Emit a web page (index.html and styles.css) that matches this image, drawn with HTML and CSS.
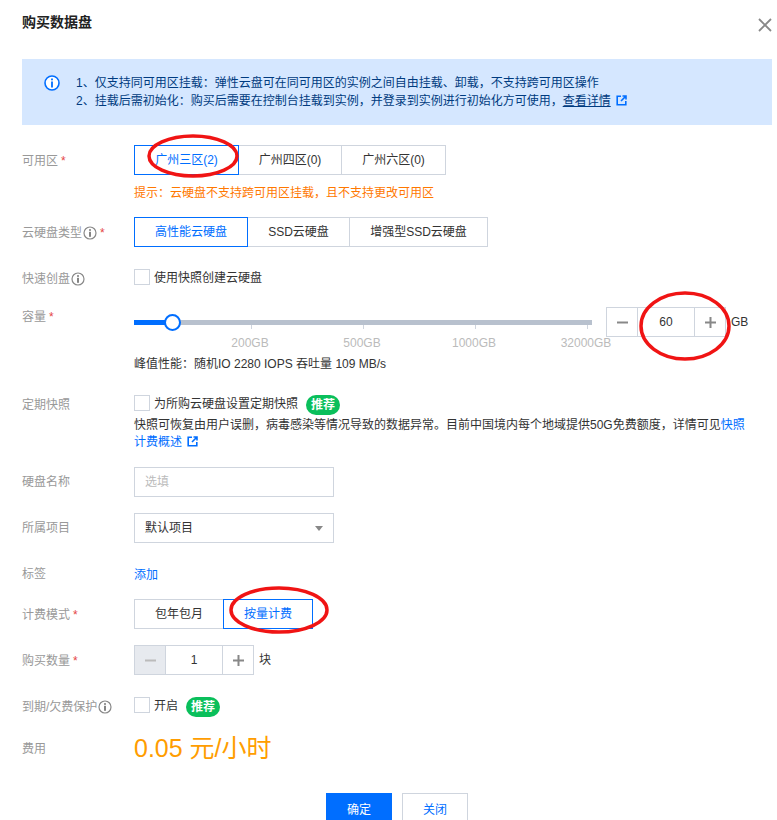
FILE: index.html
```html
<!DOCTYPE html>
<html>
<head>
    <title>购买数据盘</title>
    <link rel="stylesheet" href="styles.css">
</head>
<body>
    <div class="dialog">
        <div class="dialog-head">
            <h1>购买数据盘</h1>
            <svg class="close" width="14" height="14" viewBox="0 0 14 14"><path d="M1 1L13 13M13 1L1 13" stroke="#888" stroke-width="1.8" fill="none"/></svg>
        </div>

        <div class="alert">
            <svg class="alert-icon" width="16" height="16" viewBox="0 0 16 16"><circle cx="8" cy="8" r="7" fill="#fff" stroke="#006eff" stroke-width="1.6"/><rect x="7.1" y="3.5" width="1.8" height="1.8" fill="#006eff"/><rect x="7.1" y="6.5" width="1.8" height="6" fill="#006eff"/></svg>
            <div>
                <div>1、仅支持同可用区挂载：弹性云盘可在同可用区的实例之间自由挂载、卸载，不支持跨可用区操作</div>
                <div>2、挂载后需初始化：购买后需要在控制台挂载到实例，并登录到实例进行初始化方可使用，<a class="alert-link" href="#">查看详情</a><svg class="ext" width="11" height="11" viewBox="0 0 11 11"><path d="M5 1.2H1.2V9.8H9.8V6M6.5 1H10V4.5M10 1L5 6" stroke="#006eff" stroke-width="1.6" fill="none"/></svg></div>
            </div>
        </div>

        <!-- 可用区 -->
        <div class="row row-zone">
            <div class="label label-seg">可用区<span class="req">*</span></div>
            <div class="field">
                <div class="seg">
                    <div class="seg-item seg-w105 active">广州三区(2)</div>
                    <div class="seg-item seg-w104">广州四区(0)</div>
                    <div class="seg-item seg-w105">广州六区(0)</div>
                </div>
                <div class="hint">提示：云硬盘不支持跨可用区挂载，且不支持更改可用区</div>
            </div>
        </div>

        <div class="row gap-16">
            <div class="label label-seg">云硬盘类型<svg class="tip" width="14" height="14" viewBox="0 0 14 14"><circle cx="7" cy="7" r="6" fill="none" stroke="#888" stroke-width="1.2"/><rect x="6.2" y="3.2" width="1.6" height="1.6" fill="#666"/><rect x="6.2" y="5.8" width="1.6" height="5" fill="#666"/></svg><span class="req">*</span></div>
            <div class="field">
                <div class="seg">
                    <div class="seg-item seg-w114 active">高性能云硬盘</div>
                    <div class="seg-item seg-w103">SSD云硬盘</div>
                    <div class="seg-item seg-w139">增强型SSD云硬盘</div>
                </div>
            </div>
        </div>

        <div class="row gap-22">
            <div class="label">快速创盘<svg class="tip" width="14" height="14" viewBox="0 0 14 14"><circle cx="7" cy="7" r="6" fill="none" stroke="#888" stroke-width="1.2"/><rect x="6.2" y="3.2" width="1.6" height="1.6" fill="#666"/><rect x="6.2" y="5.8" width="1.6" height="5" fill="#666"/></svg></div>
            <div class="field check-line">
                <span class="checkbox"></span>
                <span class="check-text">使用快照创建云硬盘</span>
            </div>
        </div>

        <!-- 容量 -->
        <div class="row gap-22">
            <div class="label">容量<span class="req">*</span></div>
            <div class="field">
                <div class="cap-line">
                    <div class="slider">
                        <div class="track">
                            <div class="track-on"></div>
                            <div class="handle"></div>
                        </div>
                        <div class="ticks">
                            <span class="tick tick-first"></span>
                            <span class="tick"></span>
                            <span class="tick"></span>
                            <span class="tick"></span>
                        </div>
                        <div class="tick-labels">
                            <span>200GB</span>
                            <span>500GB</span>
                            <span>1000GB</span>
                            <span>32000GB</span>
                        </div>
                    </div>
                    <div class="stepper">
                        <div class="step-btn">
                            <svg width="11" height="11" viewBox="0 0 11 11"><path d="M0 5.5H11" stroke="#888" stroke-width="2"/></svg>
                        </div>
                        <div class="step-value">60</div>
                        <div class="step-btn">
                            <svg width="11" height="11" viewBox="0 0 11 11"><path d="M0 5.5H11M5.5 0V11" stroke="#888" stroke-width="2"/></svg>
                        </div>
                    </div>
                    <span class="unit">GB</span>
                </div>
                <div class="perf">峰值性能：随机IO 2280 IOPS 吞吐量 109 MB/s</div>
            </div>
        </div>

        <div class="row gap-23">
            <div class="label">定期快照</div>
            <div class="field">
                <div class="check-line">
                    <span class="checkbox"></span>
                    <span class="check-text">为所购云硬盘设置定期快照</span>
                    <span class="badge">推荐</span>
                </div>
                <div class="desc">快照可恢复由用户误删，病毒感染等情况导致的数据异常。目前中国境内每个地域提供50G免费额度，详情可见<a href="#">快照计费概述</a><svg class="ext" width="11" height="11" viewBox="0 0 11 11"><path d="M5 1.2H1.2V9.8H9.8V6M6.5 1H10V4.5M10 1L5 6" stroke="#006eff" stroke-width="1.6" fill="none"/></svg></div>
            </div>
        </div>

        <div class="row gap-16">
            <div class="label label-box">硬盘名称</div>
            <div class="field">
                <div class="box placeholder">选填</div>
            </div>
        </div>

        <div class="row gap-16">
            <div class="label label-box">所属项目</div>
            <div class="field">
                <div class="box select">
                    <span>默认项目</span>
                    <span class="caret"></span>
                </div>
            </div>
        </div>

        <div class="row gap-23">
            <div class="label label-flat">标签</div>
            <div class="field"><a class="add-link" href="#">添加</a></div>
        </div>

        <div class="row gap-17">
            <div class="label label-seg">计费模式<span class="req">*</span></div>
            <div class="field">
                <div class="seg">
                    <div class="seg-item seg-w90">包年包月</div>
                    <div class="seg-item seg-w90 active">按量计费</div>
                </div>
            </div>
        </div>

        <div class="row gap-16">
            <div class="label label-seg">购买数量<span class="req">*</span></div>
            <div class="field cap-line">
                <div class="stepper stepper-plain">
                    <div class="step-btn disabled">
                        <svg width="11" height="11" viewBox="0 0 11 11"><path d="M0 5.5H11" stroke="#bbb" stroke-width="2"/></svg>
                    </div>
                    <div class="step-value">1</div>
                    <div class="step-btn">
                        <svg width="11" height="11" viewBox="0 0 11 11"><path d="M0 5.5H11M5.5 0V11" stroke="#888" stroke-width="2"/></svg>
                    </div>
                </div>
                <span class="unit">块</span>
            </div>
        </div>

        <div class="row gap-22">
            <div class="label">到期/欠费保护<svg class="tip" width="14" height="14" viewBox="0 0 14 14"><circle cx="7" cy="7" r="6" fill="none" stroke="#888" stroke-width="1.2"/><rect x="6.2" y="3.2" width="1.6" height="1.6" fill="#666"/><rect x="6.2" y="5.8" width="1.6" height="5" fill="#666"/></svg></div>
            <div class="field check-line">
                <span class="checkbox"></span>
                <span class="check-text">开启</span>
                <span class="badge">推荐</span>
            </div>
        </div>

        <div class="row gap-20">
            <div class="label label-seg">费用</div>
            <div class="field price">0.05 元/小时</div>
        </div>

        <div class="actions">
            <button class="btn btn-primary">确定</button>
            <button class="btn">关闭</button>
        </div>

        <!-- hand drawn marks on top of the screenshot -->
        <svg class="marks" width="777" height="820" viewBox="0 0 777 820">
            <ellipse cx="193" cy="156" rx="44" ry="20" />
            <ellipse cx="685" cy="326" rx="44" ry="33" />
            <ellipse cx="279" cy="610" rx="48" ry="22" />
        </svg>
    </div>
</body>
</html>
```

FILE: styles.css
```css
* {
    box-sizing: border-box;
}

html, body {
    margin: 0;
    height: 820px;
    overflow: hidden;
    background-color: #fff;
}

body {
    font-family: "Liberation Sans", "Noto Sans CJK SC", sans-serif;
    font-size: 12px;
    color: #333;
}

a {
    color: #006eff;
    text-decoration: none;
}

.dialog {
    position: relative;
    width: 777px;
    height: 820px;
    overflow: hidden;
    padding: 0 5px 0 22px;
}

.dialog-head {
    display: flex;
    justify-content: space-between;
    align-items: center;
    height: 59px;
    padding-bottom: 18px;
}

h1 {
    margin: 0;
    font-size: 14px;
    font-weight: bold;
    color: #222;
}

.close {
    margin-top: 9px;
}

.alert {
    display: flex;
    height: 66px;
    padding: 15px 0 15px 22px;
    background-color: #d5e7ff;
    color: #003b80;
    line-height: 18px;
}

.alert-icon {
    flex: none;
    margin: 1px 16px 0 0;
}

.alert-link {
    color: #003b80;
    text-decoration: underline;
}

.ext {
    margin-left: 5px;
    vertical-align: -1px;
}

/* form rows */
.row {
    display: flex;
}

.row-zone {
    margin-top: 20px;
}

.gap-16 { margin-top: 16px; }
.gap-17 { margin-top: 17px; }
.gap-20 { margin-top: 20px; }
.gap-22 { margin-top: 22px; }
.gap-23 { margin-top: 23px; }

.label {
    flex: none;
    width: 112px;
    height: 16px;
    padding-top: 2px;
    line-height: 16px;
    color: #999;
    white-space: nowrap;
}

.label-seg {
    height: 30px;
    padding-top: 8px;
}

.label-box {
    height: 30px;
    padding-top: 7px;
}

.label-flat {
    padding-top: 0;
}

.req {
    margin-left: 3px;
    color: #e54545;
}

.tip {
    margin-left: 1px;
    vertical-align: -3px;
}

.field {
    flex: 1;
    min-width: 0;
    line-height: 16px;
}

.add-link {
    display: block;
    padding-top: 1px;
    height: 16px;
}

/* segmented buttons */
.seg {
    display: flex;
    height: 30px;
}

.seg-item {
    height: 30px;
    margin-left: -1px;
    padding-top: 1px;
    border: 1px solid #cfd5de;
    line-height: 27px;
    text-align: center;
    color: #333;
    background-color: #fff;
}

.seg-item:first-child {
    margin-left: 0;
}

.seg-item.active {
    position: relative;
    border-color: #006eff;
    color: #006eff;
}

.seg-w90 { width: 90px; }
.seg-w103 { width: 103px; }
.seg-w104 { width: 104px; }
.seg-w105 { width: 105px; }
.seg-w114 { width: 114px; }
.seg-w139 { width: 139px; }

.hint {
    margin-top: 10px;
    color: #ff7800;
}

.checkbox {
    flex: none;
    width: 16px;
    height: 16px;
    border: 1px solid #cfd5de;
    background-color: #fff;
}

.check-line {
    display: flex;
    align-items: center;
    gap: 4px;
    height: 16px;
}

.check-text {
    margin-top: 2px;
}

.badge {
    flex: none;
    width: 34px;
    height: 20px;
    margin: 4px 0 0 4px;
    border-radius: 10px;
    background-color: #0abf5b;
    color: #fff;
    font-weight: bold;
    line-height: 20px;
    text-align: center;
}

/* capacity */
.cap-line {
    display: flex;
}

.slider {
    flex: none;
    width: 458px;
    padding-top: 13px;
}

.track {
    position: relative;
    height: 5px;
    background-color: #b8c1ce;
}

.track-on {
    width: 38px;
    height: 5px;
    background-color: #006eff;
}

.handle {
    position: absolute;
    left: 30px;
    top: -6px;
    width: 17px;
    height: 17px;
    border: 2px solid #006eff;
    border-radius: 50%;
    background-color: #fff;
}

.ticks {
    display: flex;
    height: 4px;
}

.tick {
    flex: none;
    width: 112px;
    border-right: 1px solid #cfd5de;
}

.tick-first {
    width: 118px;
}

.tick-labels {
    display: flex;
    margin: 6px 0 0 60px;
    color: #bbb;
}

.tick-labels span {
    flex: none;
    width: 112px;
    text-align: center;
}

.stepper {
    display: flex;
    flex: none;
    width: 120px;
    height: 30px;
    margin-left: 14px;
    border: 1px solid #cfd5de;
}

.stepper-plain {
    margin-left: 0;
}

.step-btn {
    display: flex;
    align-items: center;
    justify-content: center;
    flex: none;
    width: 30px;
    background-color: #fff;
}

.step-btn.disabled {
    background-color: #e7eaef;
}

.step-value {
    flex: 1;
    border-left: 1px solid #cfd5de;
    border-right: 1px solid #cfd5de;
    line-height: 28px;
    text-align: center;
}

.unit {
    margin-left: 5px;
    line-height: 30px;
}

.perf {
    margin-top: 5px;
}

.desc {
    margin-top: 6px;
    width: 615px;
    line-height: 17px;
}

/* inputs */
.box {
    width: 200px;
    height: 30px;
    border: 1px solid #cfd5de;
    padding: 0 10px;
    line-height: 28px;
    background-color: #fff;
}

.placeholder {
    color: #bbb;
}

.select {
    display: flex;
    justify-content: space-between;
    align-items: center;
}

.caret {
    width: 0;
    height: 0;
    border-left: 4px solid transparent;
    border-right: 4px solid transparent;
    border-top: 5px solid #888;
}

.price {
    font-size: 25px;
    line-height: 30px;
    color: #ff9d00;
}

.actions {
    display: flex;
    gap: 10px;
    margin: 30px 0 0 304px;
}

.btn {
    width: 66px;
    height: 30px;
    padding: 0;
    border: 1px solid #cfd5de;
    background-color: #fff;
    color: #006eff;
    font-family: inherit;
    font-size: 12px;
}

.btn-primary {
    border-color: #006eff;
    background-color: #006eff;
    color: #fff;
}

.marks {
    position: absolute;
    left: 0;
    top: 0;
}

.marks ellipse {
    fill: none;
    stroke: #f01414;
    stroke-width: 3.5;
}
```
